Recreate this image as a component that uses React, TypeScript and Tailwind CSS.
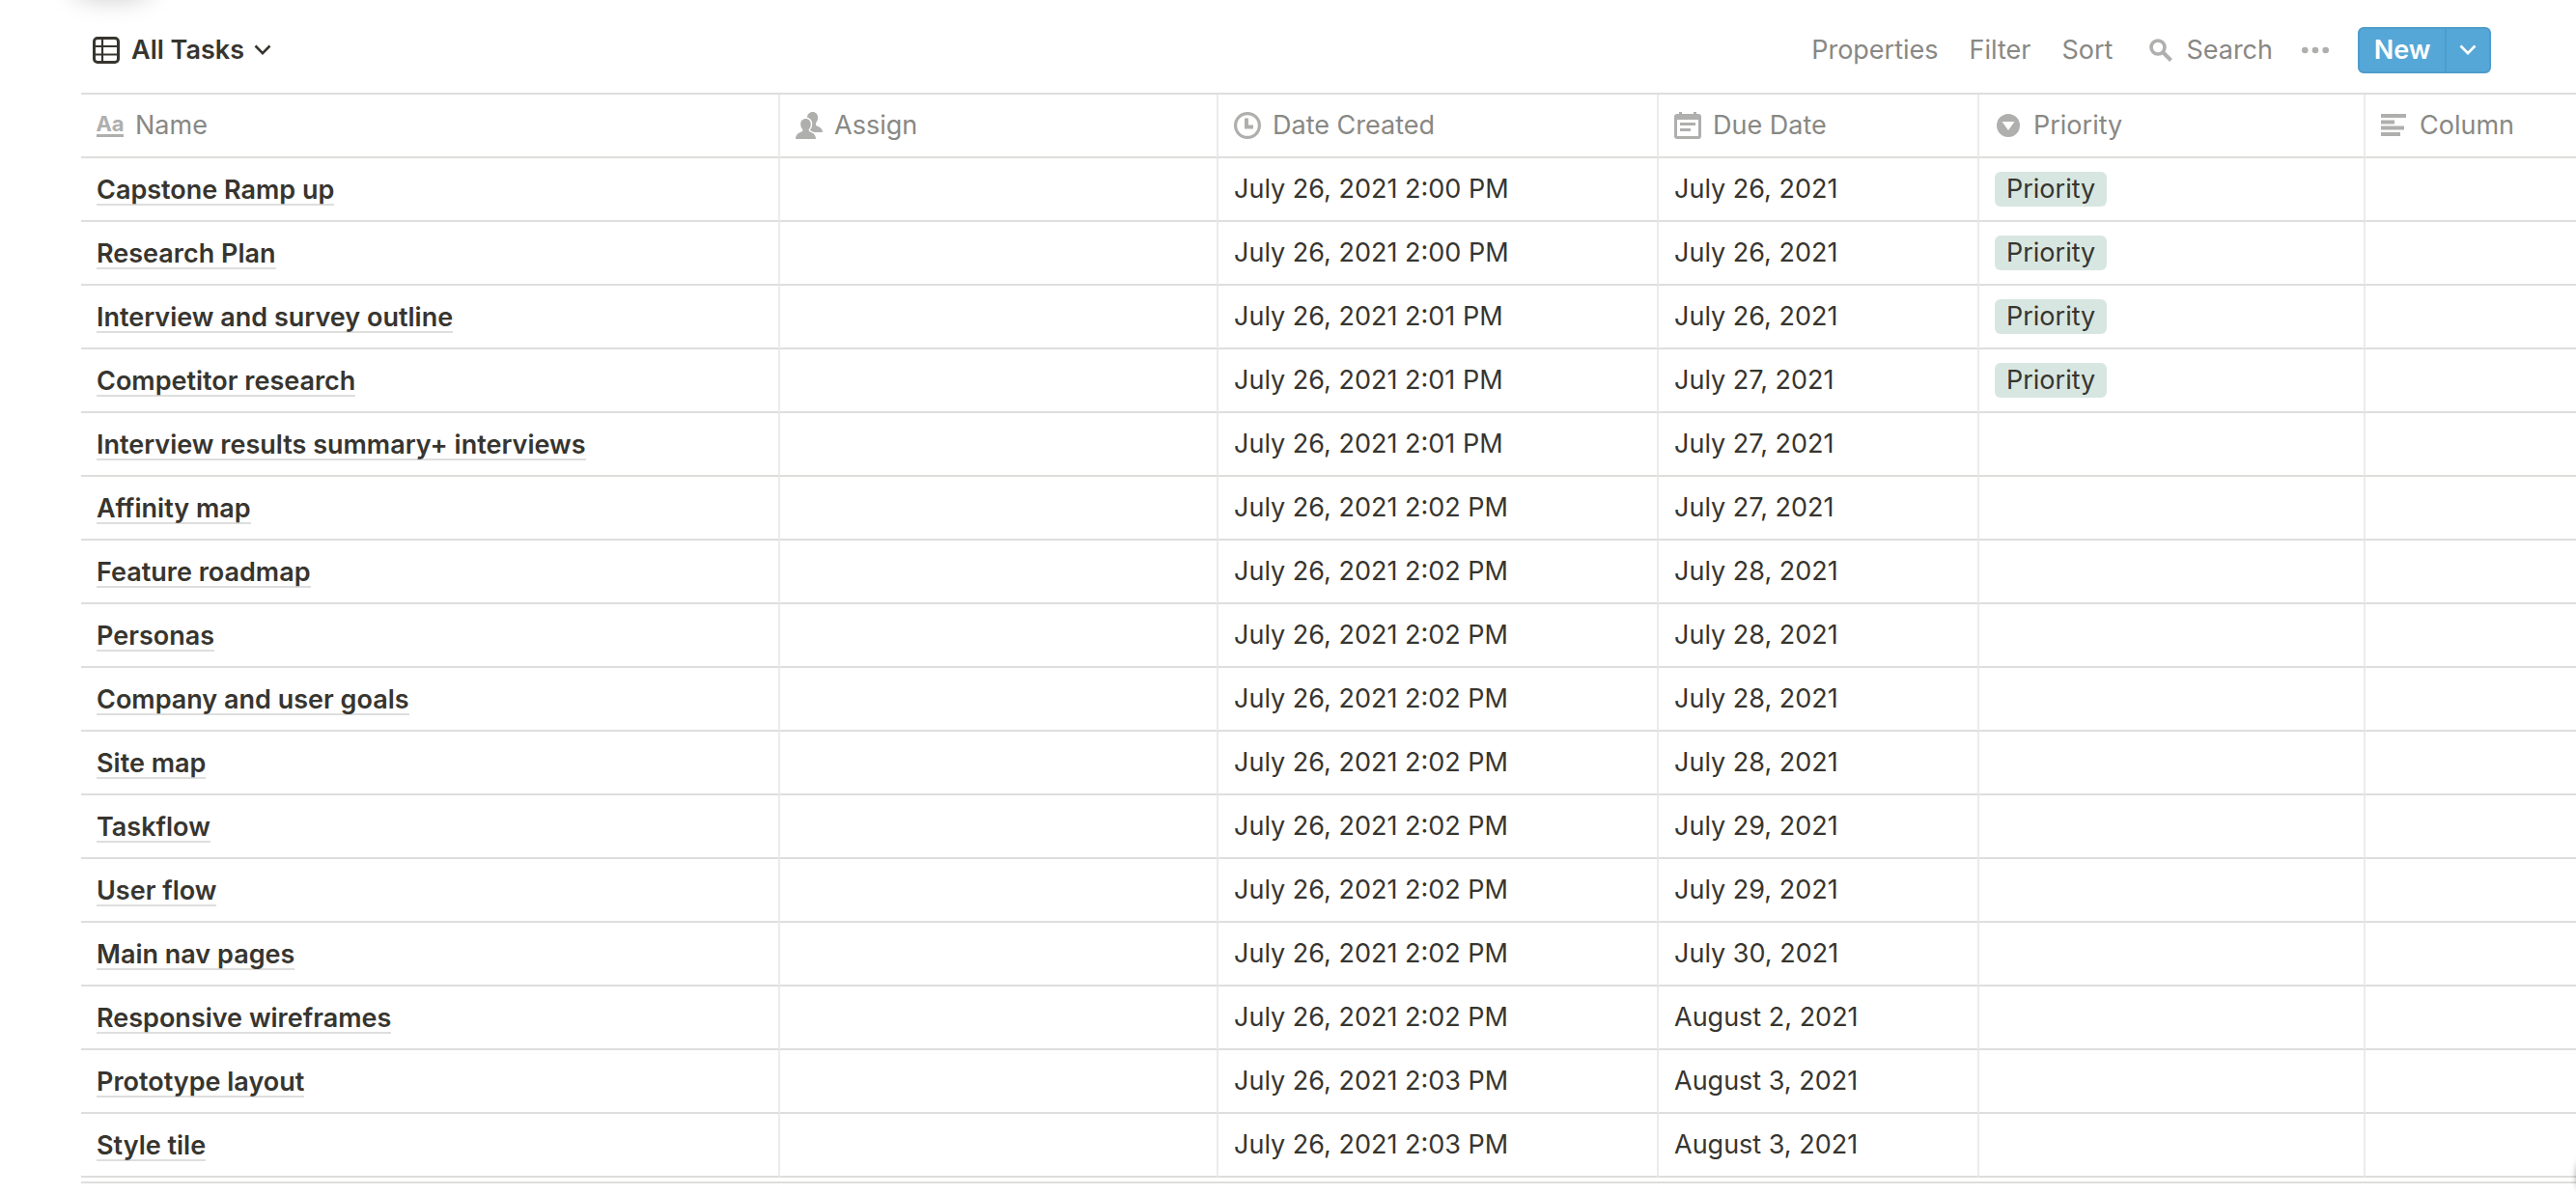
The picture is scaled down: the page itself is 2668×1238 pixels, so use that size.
import React from "react";

type Task = { name: string; created: string; due: string; priority?: boolean };

const tasks: Task[] = [
  { name: "Capstone Ramp up", created: "July 26, 2021 2:00 PM", due: "July 26, 2021", priority: true },
  { name: "Research Plan", created: "July 26, 2021 2:00 PM", due: "July 26, 2021", priority: true },
  { name: "Interview and survey outline", created: "July 26, 2021 2:01 PM", due: "July 26, 2021", priority: true },
  { name: "Competitor research", created: "July 26, 2021 2:01 PM", due: "July 27, 2021", priority: true },
  { name: "Interview results summary+ interviews", created: "July 26, 2021 2:01 PM", due: "July 27, 2021" },
  { name: "Affinity map", created: "July 26, 2021 2:02 PM", due: "July 27, 2021" },
  { name: "Feature roadmap", created: "July 26, 2021 2:02 PM", due: "July 28, 2021" },
  { name: "Personas", created: "July 26, 2021 2:02 PM", due: "July 28, 2021" },
  { name: "Company and user goals", created: "July 26, 2021 2:02 PM", due: "July 28, 2021" },
  { name: "Site map", created: "July 26, 2021 2:02 PM", due: "July 28, 2021" },
  { name: "Taskflow", created: "July 26, 2021 2:02 PM", due: "July 29, 2021" },
  { name: "User flow", created: "July 26, 2021 2:02 PM", due: "July 29, 2021" },
  { name: "Main nav pages", created: "July 26, 2021 2:02 PM", due: "July 30, 2021" },
  { name: "Responsive wireframes", created: "July 26, 2021 2:02 PM", due: "August 2, 2021" },
  { name: "Prototype layout", created: "July 26, 2021 2:03 PM", due: "August 3, 2021" },
  { name: "Style tile", created: "July 26, 2021 2:03 PM", due: "August 3, 2021" },
];

function TableIcon() {
  return (
    <svg viewBox="0 0 28 28" className="size-7" fill="none" stroke="currentColor" aria-hidden="true">
      <rect x="1.5" y="1.5" width="25" height="25" rx="3.5" strokeWidth="3" />
      <path d="M2 10h24M2 18.5h24M10 2v24" strokeWidth="2.2" />
    </svg>
  );
}

function Chevron() {
  return (
    <svg viewBox="0 0 18 12" className="h-3 w-[18px]" fill="none" stroke="currentColor" strokeWidth="2.6" aria-hidden="true">
      <path d="M1.5 1.5 9 9.2l7.5-7.7" />
    </svg>
  );
}

function SearchIcon() {
  return (
    <svg viewBox="0 0 24 24" className="size-6 text-[#afafad]" fill="none" stroke="currentColor" aria-hidden="true">
      <circle cx="9" cy="9" r="7" strokeWidth="3.6" />
      <path d="m14 14 8.5 8.5" strokeWidth="4" />
    </svg>
  );
}

function DotsIcon() {
  return (
    <svg viewBox="0 0 28 8" className="h-2 w-7" fill="#afafad" aria-hidden="true">
      <circle cx="3.3" cy="4" r="3.3" />
      <circle cx="14" cy="4" r="3.3" />
      <circle cx="24.7" cy="4" r="3.3" />
    </svg>
  );
}

function AaIcon() {
  return (
    <span className="flex h-6 w-7 justify-center border-b-[3px] border-current text-[22px] leading-[20px] font-bold" aria-hidden="true">
      Aa
    </span>
  );
}

function PeopleIcon() {
  return (
    <svg viewBox="0 0 28 28" className="size-7" fill="currentColor" aria-hidden="true">
      <path d="M17.700 0c3.300 0 5.400 2.400 5.400 5.800 0 2.200-.8 4.200-2.100 5.500v2.200c0 1.400 7 1.700 7 7.500H12V6C12 2.500 14.400 0 17.700 0Z" />
      <path
        d="M10.500 7c3.200 0 5.300 2.400 5.300 5.700 0 2.100-.8 4-2.100 5.200v1.700c0 1.500 7.300 1.500 7.300 8.400H0c0-6.900 7.300-6.900 7.300-8.400v-1.700c-1.300-1.200-2.100-3.100-2.100-5.200C5.200 9.400 7.300 7 10.500 7Z"
        stroke="#fff"
        strokeWidth="3"
        paintOrder="stroke"
      />
    </svg>
  );
}

function ClockIcon() {
  return (
    <svg viewBox="0 0 28 28" className="size-7" fill="none" stroke="currentColor" aria-hidden="true">
      <circle cx="14" cy="14" r="12.4" strokeWidth="3.2" />
      <path d="M13 6.500v9h7" strokeWidth="4" />
    </svg>
  );
}

function CalendarIcon() {
  return (
    <svg viewBox="0 0 28 28" className="size-7" fill="currentColor" aria-hidden="true">
      <path
        fillRule="evenodd"
        d="M5 0h3v2h12V0h3v2h2a3 3 0 0 1 3 3v20a3 3 0 0 1-3 3H3a3 3 0 0 1-3-3V5a3 3 0 0 1 3-3h2V0ZM3 8v17h22V8H3Zm3 3h16v3H6v-3Zm0 6h11v3H6v-3Z"
      />
    </svg>
  );
}

function SelectIcon() {
  return (
    <svg viewBox="0 0 28 28" className="size-7" aria-hidden="true">
      <circle cx="14" cy="14" r="12" fill="currentColor" />
      <path d="M7.500 10h13L14 19Z" fill="#fff" />
    </svg>
  );
}

function TextIcon() {
  return (
    <svg viewBox="0 0 28 24" className="h-6 w-7" fill="currentColor" aria-hidden="true">
      <path d="M0 0h26v4H0zM0 6.500h14v4H0zM0 12.500h24v4H0zM0 19h20v4H0z" />
    </svg>
  );
}

const columns = [
  { label: "Name", icon: <AaIcon />, width: "w-[724px]" },
  { label: "Assign", icon: <PeopleIcon />, width: "w-[454px]" },
  { label: "Date Created", icon: <ClockIcon />, width: "w-[456px]" },
  { label: "Due Date", icon: <CalendarIcon />, width: "w-[332px]" },
  { label: "Priority", icon: <SelectIcon />, width: "w-[400px]" },
  { label: "Column", icon: <TextIcon />, width: "" },
];

const cell = "h-[66px] border-r-2 border-b-2 border-r-[#ebebea] border-b-[#dededd] px-4 py-0 text-left align-middle last:border-r-0";

export default function App() {
  return (
    <div className="relative min-h-screen overflow-hidden bg-white pl-[84px] font-['Inter',sans-serif] text-[27px] leading-8 text-[#37352f]">
      <div className="absolute -top-12 left-[76px] h-10 w-20 rounded-full shadow-[0_4px_28px_rgba(0,0,0,0.25)]" />

      <div className="flex h-24 items-center justify-between pt-2 pr-[88px] pl-3">
        <button type="button" className="flex items-center font-semibold">
          <TableIcon />
          <span className="mr-[10px] ml-3">All Tasks</span>
          <Chevron />
        </button>

        <div className="flex items-center text-[#888884]">
          <button type="button" className="mr-8">Properties</button>
          <button type="button" className="mr-8">Filter</button>
          <button type="button" className="mr-[38px]">Sort</button>
          <button type="button" className="mr-[30px] flex items-center gap-[14px]">
            <SearchIcon />
            Search
          </button>
          <button type="button" aria-label="More options" className="mr-[30px]">
            <DotsIcon />
          </button>
          <div className="flex h-12 overflow-hidden rounded-md border-2 border-[#4e9cca] bg-[#55a7d7] font-semibold text-white">
            <button type="button" className="w-[88px]">New</button>
            <button type="button" aria-label="New task options" className="flex w-[46px] items-center justify-center border-l-2 border-[#4e9cca]">
              <Chevron />
            </button>
          </div>
        </div>
      </div>

      <table className="w-full table-fixed border-separate border-spacing-0 border-t-2 border-b-2 border-[#dededd] pb-1">
        <thead>
          <tr>
            {columns.map((c) => (
              <th key={c.label} scope="col" className={`${cell} ${c.width} font-normal text-[#888884]`}>
                <span className="flex items-center gap-3">
                  <span className="text-[#afafad]">{c.icon}</span>
                  {c.label}
                </span>
              </th>
            ))}
          </tr>
        </thead>
        <tbody>
          {tasks.map((t) => (
            <tr key={t.name}>
              <td className={cell}>
                <a href="#" className="block w-fit border-b-2 border-[#dededd] pt-1 leading-7 font-semibold whitespace-nowrap">
                  {t.name}
                </a>
              </td>
              <td className={cell} />
              <td className={cell}>{t.created}</td>
              <td className={cell}>{t.due}</td>
              <td className={cell}>
                {t.priority && <span className="block h-9 w-fit rounded-md bg-[#d8e6e1] px-3 leading-9">Priority</span>}
              </td>
              <td className={cell} />
            </tr>
          ))}
        </tbody>
      </table>

      <div className="absolute -right-14 -bottom-2 size-14 rounded-full shadow-[0_0_6px_rgba(0,0,0,0.35)]" />
    </div>
  );
}
